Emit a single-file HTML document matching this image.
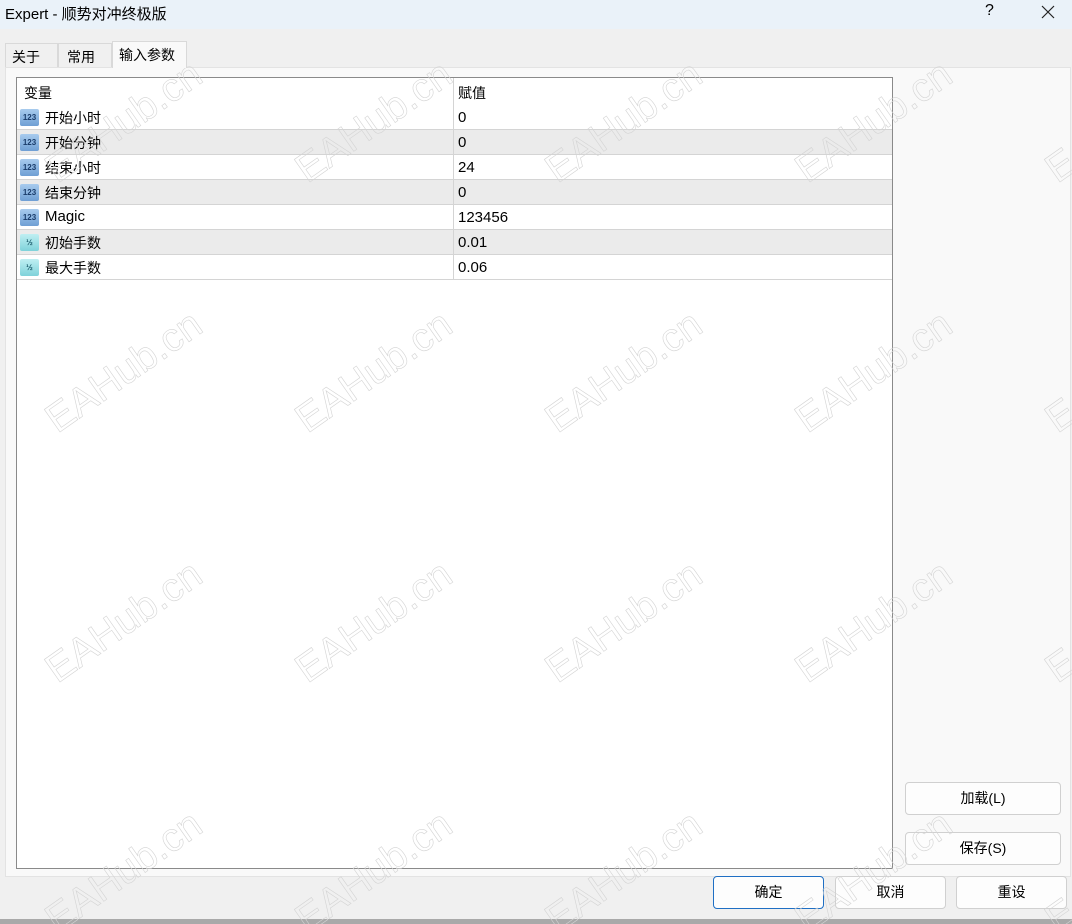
<!DOCTYPE html>
<html><head><meta charset="utf-8"><style>
*{margin:0;padding:0;box-sizing:border-box}
html{width:1072px;height:924px;overflow:hidden}
body{width:1072px;height:924px;overflow:hidden;background:#f0f0f0;font-family:"Liberation Sans","Noto Sans CJK SC",sans-serif;font-size:14px;color:#000;position:relative}
.title{position:absolute;left:0;top:0;width:1072px;height:29px;background:#eaf2f9;}
.title span{position:absolute;left:5px;top:3px;font-size:15px}
.tab{position:absolute;top:43px;height:25px;border:1px solid #d9d9d9;border-bottom:none;background:#f0f0f0;padding:3px 0 0 6px}
.panel{position:absolute;left:5px;top:67px;width:1066px;height:810px;background:#f9f9f9;border:1px solid #e3e3e3}
.grid{position:absolute;left:16px;top:77px;width:877px;height:792px;background:#fff;border:1px solid #8a8a8a}
.row{position:absolute;left:0;width:875px;height:25px;border-bottom:1px solid #d4d4d4}
.row.g{background:#ebebeb}
.row .a{position:absolute;left:28px;top:3px}
.row .b{position:absolute;left:441px;top:4px;font-size:15px}
.vl{position:absolute;left:436px;top:0;width:1px;height:202px;background:#d4d4d4}
.ic{position:absolute;left:3px;top:4px;width:19px;height:17px;border-radius:2px;font-size:8px;font-weight:bold;line-height:17px;text-align:center;color:#1a3c6a}
.i1{background:linear-gradient(#a8cbee,#6f9fd4)}
.i2{background:linear-gradient(#bfeff2,#7fd2da);color:#1a5a6a}
.btn{position:absolute;height:33px;background:#fdfdfd;border:1px solid #d0d0d0;border-radius:4px;text-align:center;line-height:31px;font-size:14px}
.wm{position:absolute;font-size:40px;color:transparent;-webkit-text-stroke:0.6px #d4d4d4;transform:translate(-50%,-50%) rotate(-35deg);white-space:nowrap;font-family:"Liberation Sans",sans-serif}
</style></head><body>
<div class="title"><span>Expert - 顺势对冲终极版</span>
<span style="left:985px;top:2px;font-size:16px">?</span>
<svg style="position:absolute;left:1041px;top:5px" width="14" height="14"><path d="M1 1L13 13M13 1L1 13" stroke="#222" stroke-width="1.2"/></svg></div>
<div class="tab" style="left:5px;width:53px">关于</div>
<div class="tab" style="left:58px;width:54px;padding-left:8px">常用</div>
<div class="panel"></div>
<div class="tab" style="left:112px;width:75px;top:41px;height:27px;background:#f9f9f9;z-index:2">输入参数</div>
<div class="grid">
<div class="row" style="top:2px;border:none"><span class="a" style="left:7px">变量</span><span class="b" style="font-size:14px;top:3px">赋值</span></div>
<div class="row" style="top:27px"><div class="ic i1">123</div><span class="a">开始小时</span><span class="b">0</span></div>
<div class="row g" style="top:52px"><div class="ic i1">123</div><span class="a">开始分钟</span><span class="b">0</span></div>
<div class="row" style="top:77px"><div class="ic i1">123</div><span class="a">结束小时</span><span class="b">24</span></div>
<div class="row g" style="top:102px"><div class="ic i1">123</div><span class="a">结束分钟</span><span class="b">0</span></div>
<div class="row" style="top:127px"><div class="ic i1">123</div><span class="a" style="font-size:15px">Magic</span><span class="b">123456</span></div>
<div class="row g" style="top:152px"><div class="ic i2">½</div><span class="a">初始手数</span><span class="b">0.01</span></div>
<div class="row" style="top:177px"><div class="ic i2">½</div><span class="a">最大手数</span><span class="b">0.06</span></div>
<div class="vl"></div>
</div>
<div class="btn" style="left:905px;top:782px;width:156px">加载(L)</div>
<div class="btn" style="left:905px;top:832px;width:156px">保存(S)</div>
<div class="btn" style="left:713px;top:876px;width:111px;border:1px solid #1f6fc4">确定</div>
<div class="btn" style="left:835px;top:876px;width:111px">取消</div>
<div class="btn" style="left:956px;top:876px;width:111px">重设</div>
<div style="position:absolute;left:0;top:919px;width:1072px;height:5px;background:#a9a9a9"></div>
<div class="wm" style="left:124px;top:122px">EAHub.cn</div>
<div class="wm" style="left:374px;top:122px">EAHub.cn</div>
<div class="wm" style="left:624px;top:122px">EAHub.cn</div>
<div class="wm" style="left:874px;top:122px">EAHub.cn</div>
<div class="wm" style="left:1124px;top:122px">EAHub.cn</div>
<div class="wm" style="left:124px;top:372px">EAHub.cn</div>
<div class="wm" style="left:374px;top:372px">EAHub.cn</div>
<div class="wm" style="left:624px;top:372px">EAHub.cn</div>
<div class="wm" style="left:874px;top:372px">EAHub.cn</div>
<div class="wm" style="left:1124px;top:372px">EAHub.cn</div>
<div class="wm" style="left:124px;top:622px">EAHub.cn</div>
<div class="wm" style="left:374px;top:622px">EAHub.cn</div>
<div class="wm" style="left:624px;top:622px">EAHub.cn</div>
<div class="wm" style="left:874px;top:622px">EAHub.cn</div>
<div class="wm" style="left:1124px;top:622px">EAHub.cn</div>
<div class="wm" style="left:124px;top:872px">EAHub.cn</div>
<div class="wm" style="left:374px;top:872px">EAHub.cn</div>
<div class="wm" style="left:624px;top:872px">EAHub.cn</div>
<div class="wm" style="left:874px;top:872px">EAHub.cn</div>
<div class="wm" style="left:1124px;top:872px">EAHub.cn</div>
</body></html>
